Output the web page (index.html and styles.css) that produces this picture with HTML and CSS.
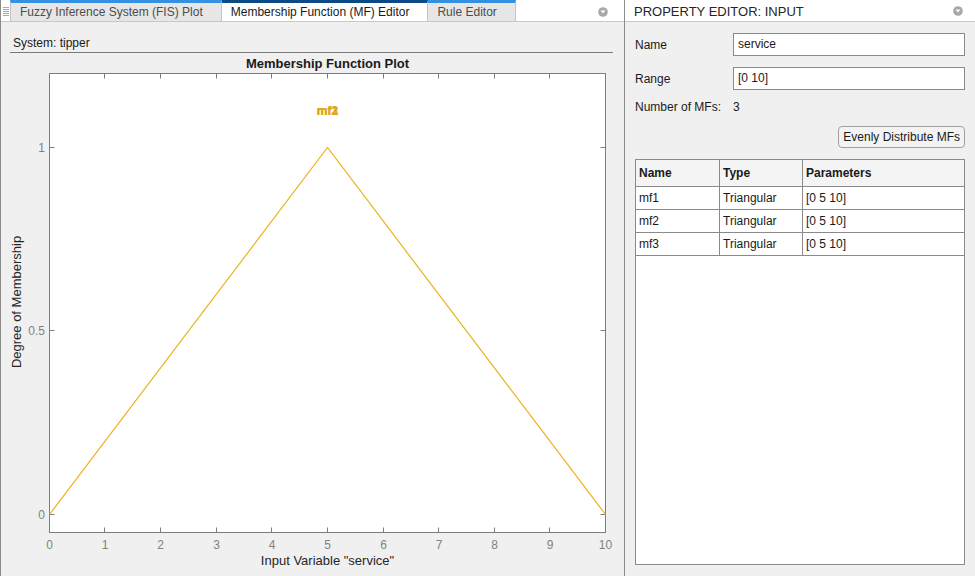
FILE: index.html
```html
<!DOCTYPE html>
<html>
<head>
<meta charset="utf-8">
<link rel="stylesheet" href="styles.css">
</head>
<body>
<div class="app">
  <section class="left">
    <div class="tabbar">
      <div class="grip">
        <svg width="6" height="9" viewBox="0 0 6 9"><g stroke="#a8a8a8" stroke-width="1"><line x1="0" y1="0.5" x2="6" y2="0.5"/><line x1="0" y1="2.5" x2="6" y2="2.5"/><line x1="0" y1="4.5" x2="6" y2="4.5"/><line x1="0" y1="6.5" x2="6" y2="6.5"/><line x1="0" y1="8.5" x2="6" y2="8.5"/></g></svg>
      </div>
      <div class="tab first">Fuzzy Inference System (FIS) Plot</div>
      <div class="tab active">Membership Function (MF) Editor</div>
      <div class="tab">Rule Editor</div>
      <div class="tab-spacer"></div>
      <div class="menu-btn">
        <svg width="10" height="10" viewBox="0 0 10 10"><circle cx="5" cy="5" r="4.8" fill="#a8a8a8"/><path d="M2.6 3.6 L7.4 3.6 L5 6.6 Z" fill="#fff"/></svg>
      </div>
    </div>
    <div class="left-body">
      <div class="system">System: tipper</div>
      <svg class="plot" width="623" height="523" viewBox="1 53 623 523">
        <text class="plot-title" x="327.5" y="68" text-anchor="middle">Membership Function Plot</text>
        <rect x="49.5" y="73.5" width="556" height="459" fill="#fff" stroke="#7d7d7d"/>
        <g stroke="#7d7d7d" stroke-width="1">
          <line x1="104.5" y1="532.5" x2="104.5" y2="527.5"/>
          <line x1="160.5" y1="532.5" x2="160.5" y2="527.5"/>
          <line x1="216.5" y1="532.5" x2="216.5" y2="527.5"/>
          <line x1="271.5" y1="532.5" x2="271.5" y2="527.5"/>
          <line x1="327.5" y1="532.5" x2="327.5" y2="527.5"/>
          <line x1="383.5" y1="532.5" x2="383.5" y2="527.5"/>
          <line x1="438.5" y1="532.5" x2="438.5" y2="527.5"/>
          <line x1="494.5" y1="532.5" x2="494.5" y2="527.5"/>
          <line x1="549.5" y1="532.5" x2="549.5" y2="527.5"/>
          <line x1="104.5" y1="73.5" x2="104.5" y2="78.5"/>
          <line x1="160.5" y1="73.5" x2="160.5" y2="78.5"/>
          <line x1="216.5" y1="73.5" x2="216.5" y2="78.5"/>
          <line x1="271.5" y1="73.5" x2="271.5" y2="78.5"/>
          <line x1="327.5" y1="73.5" x2="327.5" y2="78.5"/>
          <line x1="383.5" y1="73.5" x2="383.5" y2="78.5"/>
          <line x1="438.5" y1="73.5" x2="438.5" y2="78.5"/>
          <line x1="494.5" y1="73.5" x2="494.5" y2="78.5"/>
          <line x1="549.5" y1="73.5" x2="549.5" y2="78.5"/>
          <line x1="49.5" y1="514.5" x2="54.5" y2="514.5"/>
          <line x1="49.5" y1="330.5" x2="54.5" y2="330.5"/>
          <line x1="49.5" y1="147.5" x2="54.5" y2="147.5"/>
          <line x1="605.5" y1="514.5" x2="600.5" y2="514.5"/>
          <line x1="605.5" y1="330.5" x2="600.5" y2="330.5"/>
          <line x1="605.5" y1="147.5" x2="600.5" y2="147.5"/>
        </g>
        <g class="tick-label" text-anchor="middle">
          <text x="49.5" y="549">0</text>
          <text x="105" y="549">1</text>
          <text x="160.5" y="549">2</text>
          <text x="216.5" y="549">3</text>
          <text x="272" y="549">4</text>
          <text x="327.5" y="549">5</text>
          <text x="383.5" y="549">6</text>
          <text x="439" y="549">7</text>
          <text x="494.5" y="549">8</text>
          <text x="550" y="549">9</text>
          <text x="605.5" y="549">10</text>
        </g>
        <g class="tick-label" text-anchor="end">
          <text x="45" y="519">0</text>
          <text x="45" y="335">0.5</text>
          <text x="45" y="152">1</text>
        </g>
        <polyline points="49.5,514.5 327.5,147.5 605.5,514.5" fill="none" stroke="#EDB120" stroke-width="1.2"/>
        <g class="mf-label" text-anchor="middle">
          <text x="327.5" y="115">mf1</text>
          <text x="327.5" y="115">mf2</text>
          <text x="327.5" y="115">mf3</text>
        </g>
        <text class="axis-label" x="327.5" y="565" text-anchor="middle">Input Variable "service"</text>
        <text class="axis-label" transform="translate(20.5,302) rotate(-90)" text-anchor="middle">Degree of Membership</text>
      </svg>
    </div>
  </section>
  <section class="right">
    <div class="rhead">
      <span class="rhead-title">PROPERTY EDITOR: INPUT</span>
      <svg width="10" height="10" viewBox="0 0 10 10"><circle cx="5" cy="5" r="4.8" fill="#a8a8a8"/><path d="M2.6 3.6 L7.4 3.6 L5 6.6 Z" fill="#fff"/></svg>
    </div>
    <div class="form">
      <div class="row">
        <span class="label">Name</span>
        <div class="field">service</div>
      </div>
      <div class="row row-gap">
        <span class="label">Range</span>
        <div class="field">[0 10]</div>
      </div>
      <div class="row row-count">
        <span class="label">Number of MFs:</span>
        <span>3</span>
      </div>
      <div class="btn-row">
        <div class="btn">Evenly Distribute MFs</div>
      </div>
      <div class="table">
        <div class="tr th">
          <div class="td">Name</div>
          <div class="td">Type</div>
          <div class="td">Parameters</div>
        </div>
        <div class="tr">
          <div class="td">mf1</div>
          <div class="td">Triangular</div>
          <div class="td">[0 5 10]</div>
        </div>
        <div class="tr">
          <div class="td">mf2</div>
          <div class="td">Triangular</div>
          <div class="td">[0 5 10]</div>
        </div>
        <div class="tr">
          <div class="td">mf3</div>
          <div class="td">Triangular</div>
          <div class="td">[0 5 10]</div>
        </div>
      </div>
    </div>
  </section>
</div>
</body>
</html>
```

FILE: styles.css
```css
* { box-sizing: border-box; }
html, body { margin: 0; padding: 0; }
body {
  width: 975px;
  height: 576px;
  overflow: hidden;
  background: #f0f0f0;
  font-family: "Liberation Sans", Arial, sans-serif;
  font-size: 12px;
  color: #1a1a1a;
}
.app { display: flex; width: 975px; height: 576px; }

/* left panel */
.left {
  width: 625px;
  flex: none;
  display: flex;
  flex-direction: column;
  border-left: 1px solid #8c8c8c;
  border-right: 1px solid #8c8c8c;
}
.tabbar {
  height: 22px;
  flex: none;
  display: flex;
  background: #fff;
  border-bottom: 1px solid #c8c8c8;
}
.grip {
  width: 9px;
  display: flex;
  align-items: center;
  justify-content: center;
  padding-top: 2px;
}
.tab {
  padding: 0 18px 0 9px;
  line-height: 18px;
  border-top: 3px solid #3390e2;
  border-right: 1px solid #c4c4c4;
  background: #e6e6e6;
  color: #4d4d4d;
  white-space: nowrap;
}
.tab.first { border-left: 1px solid #c4c4c4; }
.tab.active {
  border-top-color: #0c4a87;
  background: #fff;
  color: #1a1a1a;
}
.tab-spacer { flex: 1; }
.menu-btn {
  display: flex;
  align-items: center;
  margin-right: 16px;
  padding-top: 2px;
}
.left-body { flex: 1; display: flex; flex-direction: column; }
.system {
  margin: 14px 11px 0 9px;
  padding: 0 0 2px 3px;
  line-height: 14px;
  border-bottom: 1px solid #7a7a7a;
  color: #1a1a1a;
}
.plot { display: block; flex: none; }
.plot-title { font: bold 13px "Liberation Sans", Arial, sans-serif; fill: #1a1a1a; }
.tick-label { font: 12px "Liberation Sans", Arial, sans-serif; fill: #828282; }
.mf-label { font: bold 12px "Liberation Sans", Arial, sans-serif; fill: #E2A622; }
.axis-label { font: 13px "Liberation Sans", Arial, sans-serif; fill: #262626; }

/* right panel */
.right { flex: 1; display: flex; flex-direction: column; }
.rhead {
  height: 22px;
  flex: none;
  display: flex;
  align-items: center;
  background: #fff;
  border-bottom: 1px solid #c8c8c8;
  padding: 1px 12px 0 9px;
  font-size: 13px;
  color: #262626;
}
.rhead-title { flex: 1; }
.form {
  flex: 1;
  display: flex;
  flex-direction: column;
  padding: 11px 10px 11px 10px;
}
.row { display: flex; align-items: center; }
.row-gap { margin-top: 11px; }
.row-count { margin-top: 10px; line-height: 14px; }
.label { width: 98px; flex: none; }
.field {
  flex: 1;
  height: 23px;
  border: 1px solid #8a8a8a;
  background: #fff;
  padding: 0 4px;
  line-height: 21px;
}
.btn-row { display: flex; justify-content: flex-end; margin-top: 12px; }
.btn {
  height: 22px;
  line-height: 20px;
  padding: 0 4px;
  border: 1px solid #a0a0a0;
  border-radius: 4px;
  background: #f3f3f3;
}
.table {
  flex: 1;
  margin-top: 11px;
  border: 1px solid #8a8a8a;
  background: #fff;
}
.tr {
  display: grid;
  grid-template-columns: 84px 83px 1fr;
  height: 23px;
  border-bottom: 1px solid #8a8a8a;
}
.th { height: 27px; background: #f4f4f4; font-weight: bold; }
.td {
  display: flex;
  align-items: center;
  padding-left: 3px;
  border-right: 1px solid #8a8a8a;
}
.td:last-child { border-right: none; }
```
